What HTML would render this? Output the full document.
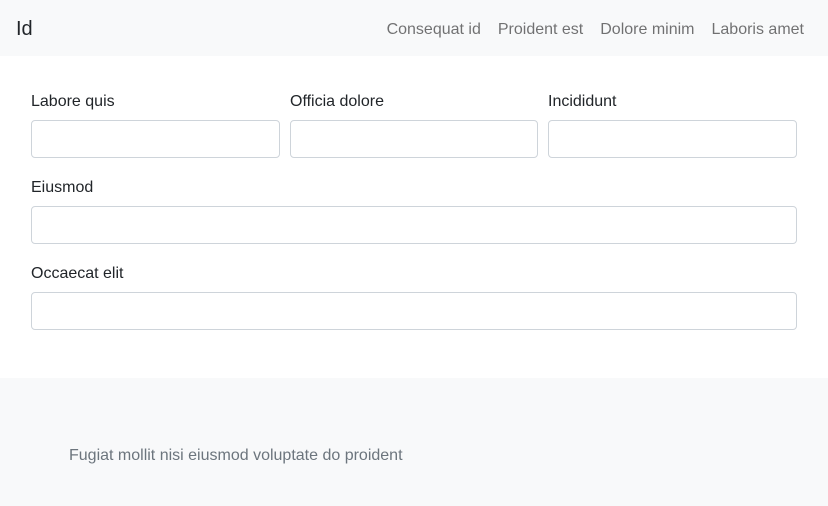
<!DOCTYPE html>
<html><head><meta charset="utf-8"><style>
*{box-sizing:border-box;margin:0;padding:0}
body{width:828px;height:506px;font-family:"Liberation Sans",Arial,sans-serif;font-size:16px;color:#212529;background:#fff;overflow:hidden;position:relative}
.nav{position:absolute;left:0;top:0;width:828px;height:56px;background:#f8f9fa}
.brand{position:absolute;left:16px;top:17px;font-size:20px;line-height:24px;color:#212529}
.links{position:absolute;right:24px;top:20px;line-height:20px;color:rgba(0,0,0,.55)}
.links span{margin-left:17px}
.lab{position:absolute;line-height:20px}
.inp{position:absolute;height:38px;border:1px solid #ced4da;border-radius:4px;background:#fff}
.foot{position:absolute;left:0;top:378px;width:828px;height:128px;background:#f8f9fa}
.foot p{position:absolute;left:69px;top:68px;color:#6c757d;line-height:20px}
</style></head><body>
<div class="nav"><div class="brand">Id</div>
<div class="links"><span>Consequat id</span><span>Proident est</span><span>Dolore minim</span><span>Laboris amet</span></div></div>
<div class="lab" style="left:31px;top:92px">Labore quis</div>
<div class="lab" style="left:290px;top:92px">Officia dolore</div>
<div class="lab" style="left:548px;top:92px">Incididunt</div>
<div class="inp" style="left:31px;top:120px;width:249px"></div>
<div class="inp" style="left:290px;top:120px;width:248px"></div>
<div class="inp" style="left:548px;top:120px;width:249px"></div>
<div class="lab" style="left:31px;top:178px">Eiusmod</div>
<div class="inp" style="left:31px;top:206px;width:766px"></div>
<div class="lab" style="left:31px;top:264px">Occaecat elit</div>
<div class="inp" style="left:31px;top:292px;width:766px"></div>
<div class="foot"><p>Fugiat mollit nisi eiusmod voluptate do proident</p></div>
</body></html>
